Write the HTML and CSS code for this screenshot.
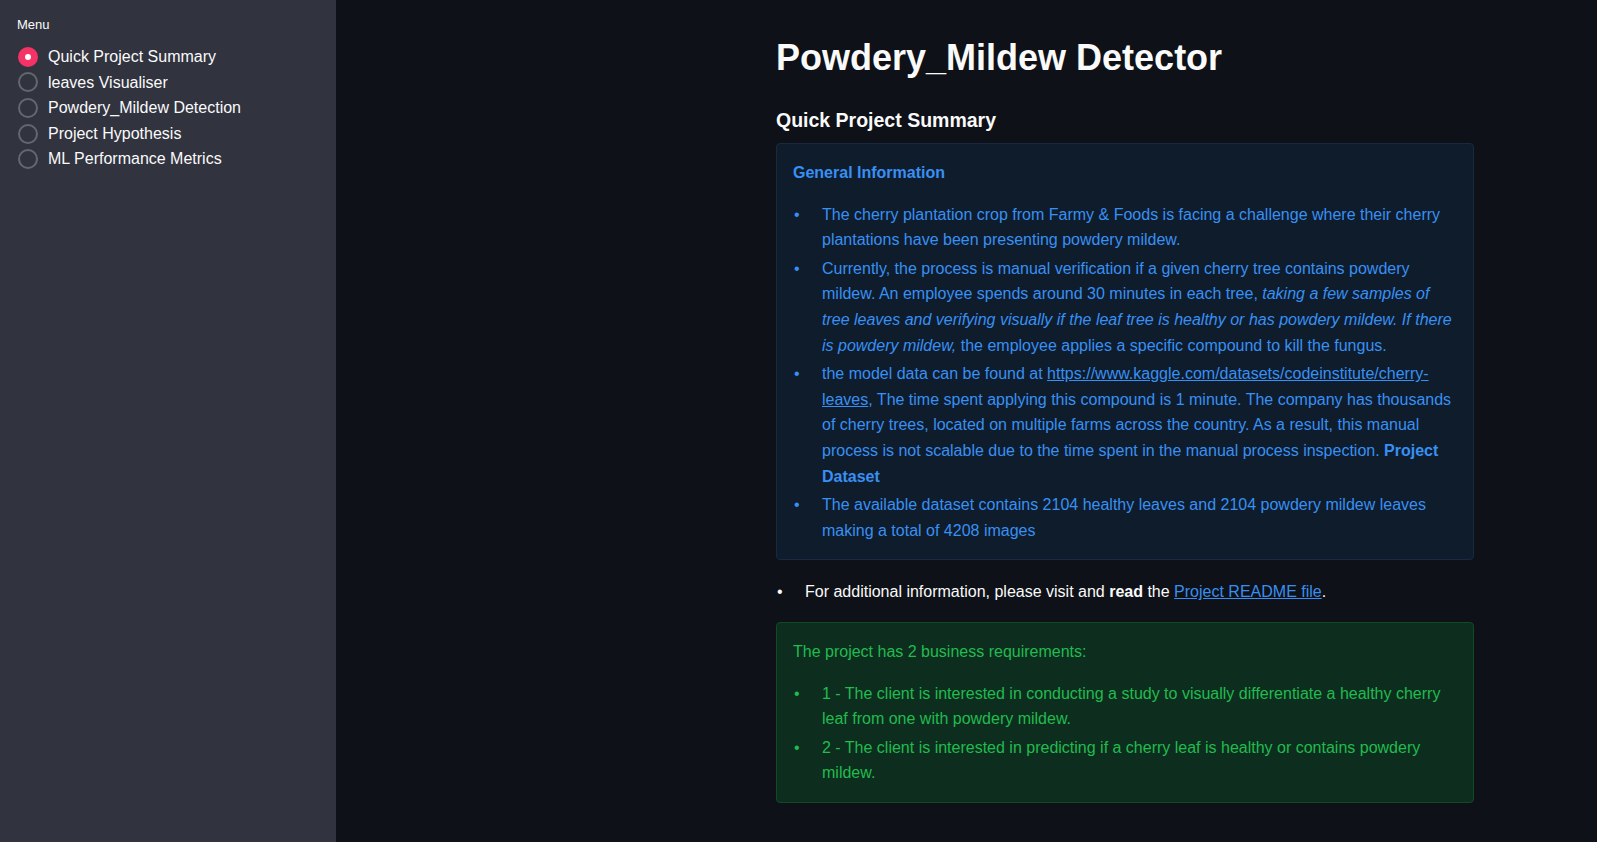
FILE: index.html
```html
<!DOCTYPE html>
<html>
<head>
<meta charset="utf-8">
<link rel="stylesheet" href="styles.css">
</head>
<body>
<div class="app">
  <aside class="sidebar">
    <div class="menu-label">Menu</div>
    <div class="radio-group">
      <div class="radio selected"><span class="dot"></span><span class="radio-text">Quick Project Summary</span></div>
      <div class="radio"><span class="dot"></span><span class="radio-text">leaves Visualiser</span></div>
      <div class="radio"><span class="dot"></span><span class="radio-text">Powdery_Mildew Detection</span></div>
      <div class="radio"><span class="dot"></span><span class="radio-text">Project Hypothesis</span></div>
      <div class="radio"><span class="dot"></span><span class="radio-text">ML Performance Metrics</span></div>
    </div>
  </aside>
  <main class="main">
    <div class="block">
      <h1 class="title">Powdery_Mildew Detector</h1>
      <h3 class="subheader">Quick Project Summary</h3>
      <div class="alert info">
        <p class="alert-head"><strong>General Information</strong></p>
        <ul class="bullets">
          <li>The cherry plantation crop from Farmy &amp; Foods is facing a challenge where their cherry plantations have been presenting powdery mildew.</li>
          <li>Currently, the process is manual verification if a given cherry tree contains powdery mildew. An employee spends around 30 minutes in each tree, <em>taking a few samples of tree leaves and verifying visually if the leaf tree is healthy or has powdery mildew. If there is powdery mildew,</em> the employee applies a specific compound to kill the fungus.</li>
          <li>the model data can be found at <a href="#">https://www.kaggle.com/datasets/codeinstitute/cherry-leaves</a>, The time spent applying this compound is 1 minute. The company has thousands of cherry trees, located on multiple farms across the country. As a result, this manual process is not scalable due to the time spent in the manual process inspection. <strong>Project Dataset</strong></li>
          <li>The available dataset contains 2104 healthy leaves and 2104 powdery mildew leaves making a total of 4208 images</li>
        </ul>
      </div>
      <ul class="bullets plain-list">
        <li>For additional information, please visit and <strong>read</strong> the <a href="#">Project README file</a>.</li>
      </ul>
      <div class="alert success">
        <p class="alert-head">The project has 2 business requirements:</p>
        <ul class="bullets">
          <li>1 - The client is interested in conducting a study to visually differentiate a healthy cherry leaf from one with powdery mildew.</li>
          <li>2 - The client is interested in predicting if a cherry leaf is healthy or contains powdery mildew.</li>
        </ul>
      </div>
    </div>
  </main>
</div>
</body>
</html>
```

FILE: styles.css
```css
* { box-sizing: border-box; }
html, body {
  margin: 0;
  padding: 0;
  height: 100%;
}
body {
  background: #0e1117;
  color: #fafafa;
  font-family: "Liberation Sans", Arial, sans-serif;
  font-size: 16px;
  line-height: 1.6;
  overflow: hidden;
}
.app {
  display: flex;
  height: 842px;
}
.sidebar {
  width: 336px;
  flex: none;
  background: #31333f;
  padding: 15px 16px 0 17px;
}
.menu-label {
  font-size: 13px;
  line-height: 20px;
  color: #fafafa;
  margin-bottom: 9px;
}
.radio-group {
  display: flex;
  flex-direction: column;
}
.radio {
  display: flex;
  align-items: center;
  height: 25.6px;
}
.dot {
  width: 20px;
  height: 20px;
  border-radius: 50%;
  border: 2px solid #65676f;
  flex: none;
  margin-left: 1px;
  margin-right: 10px;
  position: relative;
}
.radio.selected .dot {
  background: #f63366;
  border-color: #f63366;
}
.radio.selected .dot::after {
  content: "";
  position: absolute;
  left: 5px;
  top: 5px;
  width: 6px;
  height: 6px;
  border-radius: 50%;
  background: #fff;
}
.radio-text {
  font-size: 16px;
  color: #fafafa;
}
.main {
  flex: 1;
  padding-left: 440px;
}
.block {
  width: 698px;
  padding-top: 33px;
}
.title {
  margin: 0;
  font-size: 36px;
  line-height: 50px;
  font-weight: 700;
  color: #fafafa;
}
.subheader {
  margin: 0;
  margin-top: 23px;
  font-size: 19.5px;
  line-height: 28px;
  font-weight: 700;
  color: #fafafa;
}
.alert {
  border-radius: 4px;
  padding: 16px 16px;
  margin-top: 9px;
}
.alert.info {
  background: #0f1c2c;
  border: 1px solid #172a42;
  color: #3890f3;
}
.alert.success {
  background: #0d2e1e;
  border: 1px solid #124a26;
  color: #21bb4f;
  margin-top: 17px;
}
.alert-head {
  margin: 0 0 16px 0;
}
.bullets {
  margin: 0;
  padding-left: 29px;
  list-style: none;
}
.bullets li {
  position: relative;
  margin-top: 3px;
}
.bullets li:first-child {
  margin-top: 0;
}
.bullets li::before {
  content: "\2022";
  position: absolute;
  left: -28px;
  top: 0;
}
.alert a {
  color: inherit;
}
.plain-list {
  margin: 19px 0 0 0;
}
.plain-list a {
  color: #3a8ef0;
}
```
